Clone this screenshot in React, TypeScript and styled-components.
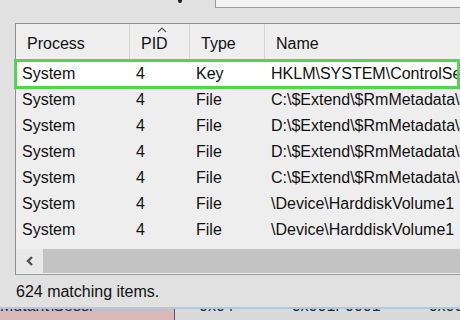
import styled, { createGlobalStyle } from "styled-components";

const GlobalStyle = createGlobalStyle`
  html, body {
    margin: 0;
    padding: 0;
    overflow: hidden;
    background: #e1e1e1;
  }
  body {
    font-family: "Liberation Sans", Arial, sans-serif;
    color: #111;
  }
`;

const Page = styled.div`
  width: 460px;
  height: 320px;
  overflow: hidden;
  display: flex;
  flex-direction: column;
  background: #e1e1e1;
`;

const TopBar = styled.div`
  height: 23px;
  display: flex;
  align-items: flex-start;
`;

const Dot = styled.div`
  width: 4px;
  height: 3px;
  margin-left: 178px;
  background: #222;
  border-radius: 0 0 2px 2px;
`;

const SearchBox = styled.div`
  flex: 1;
  height: 7px;
  margin-left: 33px;
  background: #f3f3f3;
  border-left: 1px solid #9a9a9a;
  border-bottom: 1px solid #9a9a9a;
`;

const ListPanel = styled.div`
  margin-left: 15px;
  height: 250px;
  border-top: 1px solid #8e8e8e;
  border-left: 1px solid #8e8e8e;
  border-bottom: 1px solid #9a9a9a;
  background: #eeeeee;
  display: flex;
  flex-direction: column;
`;

const columns = "114px 60px 75px 1fr";

const Header = styled.div`
  display: grid;
  grid-template-columns: ${columns};
  height: 35px;
  flex-shrink: 0;
`;

const HeadCell = styled.div`
  position: relative;
  display: flex;
  align-items: center;
  padding: 5px 0 0 11px;
  font-size: 16px;
  border-right: 1px solid #d4d4d4;
  &:last-child {
    border-right: none;
  }
`;

const SortCaret = styled.svg`
  position: absolute;
  top: 3px;
  left: 27px;
`;

const Rows = styled.div`
  padding-top: 2px;
  display: flex;
  flex-direction: column;
`;

const Row = styled.div<{ $selected?: boolean }>`
  display: grid;
  grid-template-columns: ${columns};
  height: 26px;
  align-items: center;
  font-size: 16px;
  white-space: nowrap;
  overflow: hidden;
  background: ${(p) => (p.$selected ? "#ffffff" : "transparent")};
  outline: ${(p) => (p.$selected ? "3px solid #4fd84f" : "none")};
  outline-offset: -1px;
  margin-right: ${(p) => (p.$selected ? "2px" : "0")};
  position: relative;
`;

const Cell = styled.div`
  padding-left: 6px;
  overflow: hidden;
`;

const ScrollBar = styled.div`
  margin-top: 6px;
  height: 24px;
  display: flex;
  background: #e8e8e8;
`;

const ScrollArrow = styled.div`
  width: 27px;
  display: flex;
  align-items: center;
  justify-content: center;
`;

const ScrollThumb = styled.div`
  flex: 1;
  background: #c3c3c3;
`;

const Status = styled.div`
  height: 32px;
  padding-left: 16px;
  display: flex;
  align-items: center;
  padding-top: 2px;
  box-sizing: border-box;
  font-size: 16px;
`;

const BottomStrip = styled.div`
  flex: 1;
  display: grid;
  grid-template-columns: 175px 1fr;
  border-top: 2px solid #a9cbe6;
  font-size: 16px;
  line-height: 18px;
  overflow: hidden;
`;

const StripLeft = styled.div`
  background: #d9b8b8;
  border-right: 1px solid #5a5a5a;
  overflow: hidden;
  white-space: nowrap;
`;

const StripRight = styled.div`
  background: #dadada;
  overflow: hidden;
  white-space: nowrap;
`;

const StripLine = styled.div`
  display: flex;
  margin-top: -12px;
`;

const StripText = styled.span<{ $left: number }>`
  margin-left: ${(p) => p.$left}px;
  color: #2a2a2a;
`;

type Item = { process: string; pid: string; type: string; name: string };

const items: Item[] = [
  { process: "System", pid: "4", type: "Key", name: "HKLM\\SYSTEM\\ControlSet001" },
  { process: "System", pid: "4", type: "File", name: "C:\\$Extend\\$RmMetadata\\$Txf" },
  { process: "System", pid: "4", type: "File", name: "D:\\$Extend\\$RmMetadata\\$Txf" },
  { process: "System", pid: "4", type: "File", name: "D:\\$Extend\\$RmMetadata\\$Tops" },
  { process: "System", pid: "4", type: "File", name: "C:\\$Extend\\$RmMetadata\\$Tops" },
  { process: "System", pid: "4", type: "File", name: "\\Device\\HarddiskVolume1" },
  { process: "System", pid: "4", type: "File", name: "\\Device\\HarddiskVolume1" },
];

export default function App() {
  return (
    <>
      <GlobalStyle />
      <Page>
        <TopBar>
          <Dot />
          <SearchBox />
        </TopBar>
        <ListPanel>
          <Header>
            <HeadCell>Process</HeadCell>
            <HeadCell>
              <SortCaret width="10" height="6" viewBox="0 0 10 6">
                <polyline points="1,5 5,1 9,5" fill="none" stroke="#555" strokeWidth="1.2" />
              </SortCaret>
              PID
            </HeadCell>
            <HeadCell>Type</HeadCell>
            <HeadCell>Name</HeadCell>
          </Header>
          <Rows>
            {items.map((it, i) => (
              <Row key={i} $selected={i === 0}>
                <Cell>{it.process}</Cell>
                <Cell>{it.pid}</Cell>
                <Cell>{it.type}</Cell>
                <Cell>{it.name}</Cell>
              </Row>
            ))}
          </Rows>
          <ScrollBar>
            <ScrollArrow>
              <svg width="10" height="10" viewBox="0 0 10 10">
                <polyline points="7,1 3,5 7,9" fill="none" stroke="#505050" strokeWidth="2.4" />
              </svg>
            </ScrollArrow>
            <ScrollThumb />
          </ScrollBar>
        </ListPanel>
        <Status>624 matching items.</Status>
        <BottomStrip>
          <StripLeft>
            <StripLine>
              <StripText $left={0}>{"Mutant\\Sessi"}</StripText>
            </StripLine>
          </StripLeft>
          <StripRight>
            <StripLine>
              <StripText $left={24}>0x04</StripText>
              <StripText $left={58}>0x001F0001</StripText>
              <StripText $left={48}>0x0000</StripText>
            </StripLine>
          </StripRight>
        </BottomStrip>
      </Page>
    </>
  );
}
